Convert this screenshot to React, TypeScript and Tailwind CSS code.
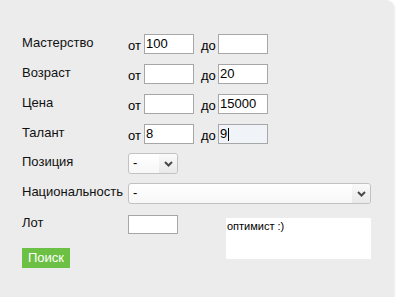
import React from "react";

const font = { fontFamily: '"Liberation Sans", Arial, sans-serif' };

function Chevron() {
  return (
    <svg width="9" height="6" viewBox="0 0 9 6" className="block">
      <path d="M1 1 L4.5 4.5 L8 1" fill="none" stroke="#4a4a4a" strokeWidth="2" />
    </svg>
  );
}

function Box({ value = "", focused = false }: { value?: string; focused?: boolean }) {
  return (
    <div
      className={`w-[50px] h-[20px] border border-[#a7a7a7] flex items-center pl-[1px] text-[13px] text-black ${
        focused ? "bg-[#f0f3f7]" : "bg-white"
      }`}
    >
      {value}
      {focused && <span className="w-px h-[13px] bg-black ml-[1px]" />}
    </div>
  );
}

function Range({ from, to, focused }: { from?: string; to?: string; focused?: boolean }) {
  return (
    <div className="flex items-end">
      <span className="w-[16px] text-[13px] leading-[15px] pb-[1px]">от</span>
      <Box value={from} />
      <span className="w-[24px] pl-[7px] text-[13px] leading-[15px] pb-[1px]">до</span>
      <Box value={to} focused={focused} />
    </div>
  );
}

function Select({ w, value }: { w: string; value: string }) {
  return (
    <div
      className={`${w} h-[21px] rounded-[3px] border border-[#c2c2c2] bg-gradient-to-b from-white to-[#f7f7f7] flex items-center justify-between pl-[4px] text-[13px]`}
    >
      <span className="leading-none -mt-[2px]">{value}</span>
      <div className="h-full w-[18px] flex items-center justify-center bg-gradient-to-b from-[#fafafa] to-[#e9e9e9] rounded-r-[3px]">
        <Chevron />
      </div>
    </div>
  );
}

function Row({ label, children }: { label: string; children: React.ReactNode }) {
  return (
    <div className="flex h-[30px]">
      <div className="w-[106px] text-[13px] leading-[15px] pt-px text-[#111]">{label}</div>
      <div>{children}</div>
    </div>
  );
}

export default function App() {
  return (
    <div className="w-[398px] h-[297px] bg-white overflow-hidden" style={font}>
      <div className="w-[394px] h-[297px] bg-[#ececec] rounded-tr-[9px] shadow-[1px_0_2px_rgba(0,0,0,0.08)] pt-[34px] pl-[22px]">
        <Row label="Мастерство">
          <Range from="100" />
        </Row>
        <Row label="Возраст">
          <Range to="20" />
        </Row>
        <Row label="Цена">
          <Range to="15000" />
        </Row>
        <Row label="Талант">
          <Range from="8" to="9" focused />
        </Row>
        <div className="-mt-[1px]">
          <Row label="Позиция">
            <Select w="w-[50px]" value="-" />
          </Row>
          <Row label="Национальность">
            <Select w="w-[243px]" value="-" />
          </Row>
        </div>
        <div className="flex h-[34px]">
          <div className="w-[106px] text-[13px] leading-[15px] pt-[2px] text-[#111]">Лот</div>
          <div className="mt-[2px] w-[50px] h-[19px] border border-[#a7a7a7] bg-white" />
          <div className="ml-[48px] mt-[5px] w-[145px] h-[41px] bg-white text-[11px] leading-[13px] pt-[2px] pl-[1px]">
            оптимист :)
          </div>
        </div>
        <div className="mt-px w-[48px] h-[20px] bg-[#6cc043] text-white text-[13px] leading-[20px] pl-[6px]">
          Поиск
        </div>
      </div>
    </div>
  );
}
